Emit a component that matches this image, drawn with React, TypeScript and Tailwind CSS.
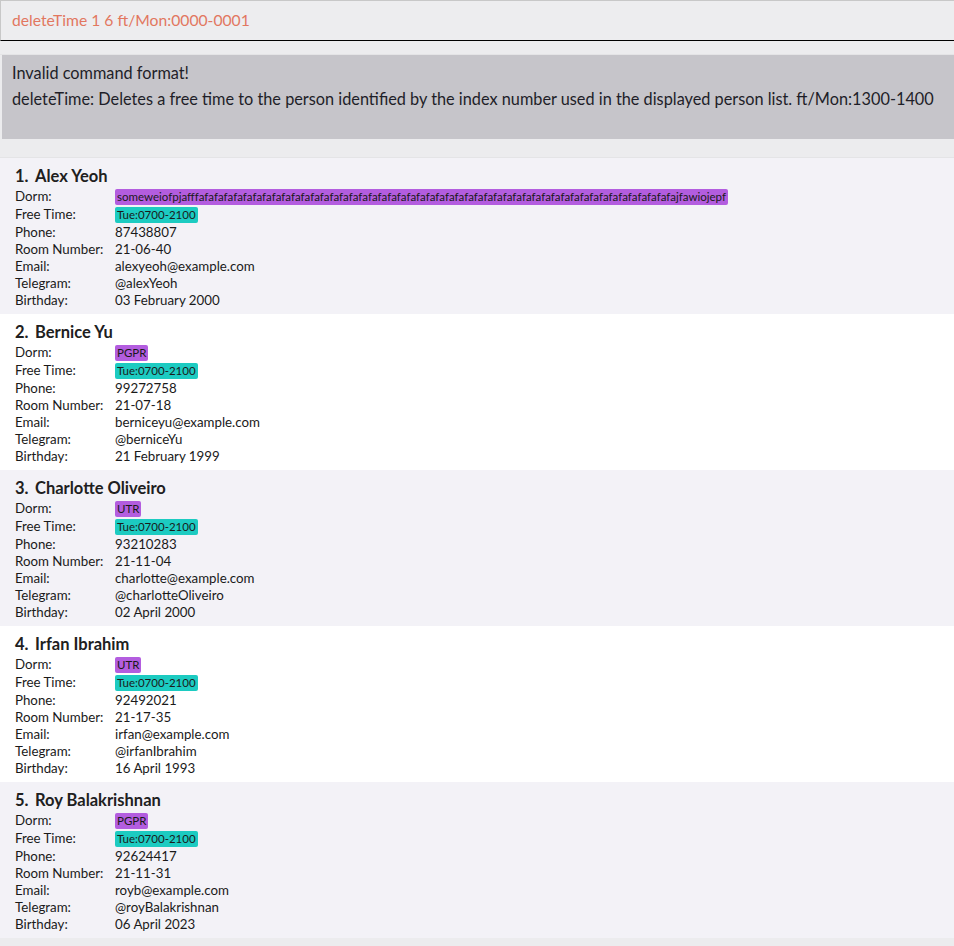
const persons = [
  {
    name: 'Alex Yeoh',
    dorm: 'someweiofpjafffafafafafafafafafafafafafafafafafafafafafafafafafafafafafafafafafafafafafafafafafafafafafafafafafafajfawiojepf',
    time: 'Tue:0700-2100',
    phone: '87438807',
    room: '21-06-40',
    email: 'alexyeoh@example.com',
    telegram: '@alexYeoh',
    birthday: '03 February 2000',
  },
  {
    name: 'Bernice Yu',
    dorm: 'PGPR',
    time: 'Tue:0700-2100',
    phone: '99272758',
    room: '21-07-18',
    email: 'berniceyu@example.com',
    telegram: '@berniceYu',
    birthday: '21 February 1999',
  },
  {
    name: 'Charlotte Oliveiro',
    dorm: 'UTR',
    time: 'Tue:0700-2100',
    phone: '93210283',
    room: '21-11-04',
    email: 'charlotte@example.com',
    telegram: '@charlotteOliveiro',
    birthday: '02 April 2000',
  },
  {
    name: 'Irfan Ibrahim',
    dorm: 'UTR',
    time: 'Tue:0700-2100',
    phone: '92492021',
    room: '21-17-35',
    email: 'irfan@example.com',
    telegram: '@irfanIbrahim',
    birthday: '16 April 1993',
  },
  {
    name: 'Roy Balakrishnan',
    dorm: 'PGPR',
    time: 'Tue:0700-2100',
    phone: '92624417',
    room: '21-11-31',
    email: 'royb@example.com',
    telegram: '@royBalakrishnan',
    birthday: '06 April 2023',
  },
];

const Row = ({ label, children, tag }: { label: string; children: React.ReactNode; tag?: boolean }) => (
  <div className={`flex items-center ${tag ? 'h-[18px]' : 'h-[17px]'}`}>
    <span className="w-[100px] shrink-0">{label}</span>
    {children}
  </div>
);

const Tag = ({ text, color }: { text: string; color: string }) => (
  <span className={`${color} rounded-[2px] px-[2px] h-[16px] leading-[16px] text-[11.5px] text-[#1a1a1a] whitespace-nowrap`}>
    {text}
  </span>
);

const PersonCard = ({ p, i }: { p: (typeof persons)[number]; i: number }) => (
  <div className={`${i % 2 === 0 ? 'bg-[#f3f2f7]' : 'bg-white'} pl-[15px] pt-[7px] pb-[5px] text-[13.3px] text-[#1a1a1a]`}>
    <div className="h-[23px] leading-[23px] text-[16.5px] font-bold text-[#202020]">
      <span className="inline-block w-[20px]">{i + 1}.</span>
      {p.name}
    </div>
    <Row label="Dorm:" tag>
      <Tag text={p.dorm} color="bg-[#b35ddf]" />
    </Row>
    <Row label="Free Time:" tag>
      <Tag text={p.time} color="bg-[#1ccbc1]" />
    </Row>
    <Row label="Phone:">{p.phone}</Row>
    <Row label="Room Number:">{p.room}</Row>
    <Row label="Email:">{p.email}</Row>
    <Row label="Telegram:">{p.telegram}</Row>
    <Row label="Birthday:">{p.birthday}</Row>
  </div>
);

const App = () => {
  return (
    <div className="w-[954px] h-[946px] bg-[#ececee] overflow-hidden" style={{ fontFamily: 'Lato, sans-serif' }}>
      <div className="h-[41px] bg-[#ededef] border-t border-l border-[#c8c8c8] border-b border-b-black flex items-center pl-[11px] text-[15.7px] text-[#e2775f]">
        deleteTime 1 6 ft/Mon:0000-0001
      </div>
      <div className="h-[14px] border-b border-[#e4e4e6]"></div>
      <div className="ml-[2px] h-[84px] bg-[#c6c5ca] pl-[10px] pt-[5px] text-[16.3px] leading-[26px] text-[#1e1e28]">
        <div>Invalid command format!</div>
        <div>deleteTime: Deletes a free time to the person identified by the index number used in the displayed person list. ft/Mon:1300-1400</div>
      </div>
      <div className="h-[19px] border-b border-[#e4e4e6]"></div>
      <div>
        {persons.map((p, i) => (
          <PersonCard key={p.name} p={p} i={i} />
        ))}
      </div>
    </div>
  );
};

export default App;
